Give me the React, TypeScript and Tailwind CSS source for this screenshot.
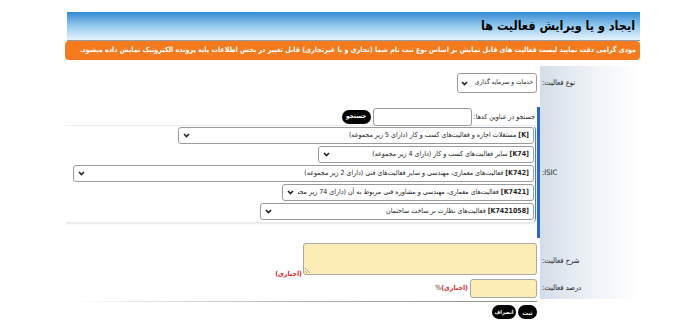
const SELECTS = [
  { code: "[K]", text: "مستغلات اجاره و فعالیت‌های کسب و کار (دارای 5 زیر مجموعه)", w: "w-[356px]" },
  { code: "[K74]", text: "سایر فعالیت‌های کسب و کار (دارای 4 زیر مجموعه)", w: "w-[216px]" },
  { code: "[K742]", text: "فعالیت‌های معماری، مهندسی و سایر فعالیت‌های فنی (دارای 2 زیر مجموعه)", w: "w-[461px]" },
  { code: "[K7421]", text: "فعالیت‌های معماری، مهندسی و مشاوره فنی مربوط به آن (دارای 74 زیر مجموعه)", w: "w-[252px]" },
  { code: "[K7421058]", text: "فعالیت‌های نظارت بر ساخت ساختمان", w: "w-[274px]" },
];

function Chevron() {
  return (
    <svg width="7" height="5" viewBox="0 0 7 5" className="shrink-0">
      <path d="M1 1l2.5 2.6L6 1" fill="none" stroke="#222" strokeWidth="1.6" />
    </svg>
  );
}

function Label(props: { text: string; className?: string }) {
  return (
    <div
      className={
        "flex justify-end bg-gradient-to-r from-[#d3dde9] via-[#eef2f7] to-white pl-[2px] text-[7.5px] whitespace-nowrap text-[#222] " +
        (props.className ?? "")
      }
    >
      {props.text}
    </div>
  );
}

export default function App() {
  return (
    <div
      dir="rtl"
      className="h-[334px] w-[694px] overflow-hidden bg-white pt-[12px] pr-[54px] pl-[65px] font-['DejaVu_Sans_Condensed','DejaVu_Sans',sans-serif]"
    >
      {/* header */}
      <div className="ml-[2px] flex h-[29px] items-center border-b border-[#8f9ba6] bg-gradient-to-b from-[#2f8ad3] via-[#93c9ee] to-[#e6f2fb] pr-[5px]">
        <span className="text-[12.5px] font-bold text-black">ایجاد و یا ویرایش فعالیت ها</span>
      </div>
      <div className="flex h-[19px] items-center overflow-hidden rounded-[4px] bg-[#f47a1e] px-[4px] text-[7.15px] font-bold whitespace-nowrap text-white">
        مودی گرامی دقت نمایید لیست فعالیت های قابل نمایش بر اساس نوع ثبت نام شما (تجاری و یا غیرتجاری) قابل تغییر در بخش اطلاعات پایه پرونده الکترونیک نمایش داده میشود.
      </div>

      {/* form */}
      <div className="mt-[6px] grid grid-cols-[100px_475px]">
        <Label text="نوع فعالیت:" className="items-start pt-[7px] leading-[20px]" />
        <div className="pt-[7px] pr-[3px] pb-[12px]">
          <div className="flex h-[20px] w-[80px] items-center justify-between rounded-[3px] border border-[#9a9a9a] bg-white px-[3px] text-[6.5px] whitespace-nowrap text-[#222]">
            <span>خدمات و سرمایه گذاری</span>
            <Chevron />
          </div>
        </div>

        <Label text="ISIC:" className="items-center pt-[2px]" />
        <div className="mt-[2px] border-r-[3px] border-[#2c68bd] pt-[1px] pb-[15px]">
          <div className="flex h-[18px] items-center gap-[2px] pr-[2px]">
            <span className="text-[7px] whitespace-nowrap text-[#222]">جستجو در عناوین کدها:</span>
            <div className="h-[18px] w-[99px] rounded-[3px] border border-[#9a9a9a] bg-white" />
            <div className="flex h-[14px] w-[29px] items-center justify-center rounded-full bg-black text-[6.5px] font-bold text-white">
              جستجو
            </div>
          </div>
          <div className="mt-[-1px] mr-[1px] flex flex-col items-start gap-[2px] rounded-r-[5px] border border-l-0 border-[#e6ecf3] border-r-[#4a7fc9] pt-[1px] pr-[1px] pb-[2px] shadow-[1px_1px_2px_rgba(0,0,0,0.1)]">
            {SELECTS.map((s) => (
              <div
                key={s.code}
                className={
                  "flex h-[17px] items-center justify-between gap-[4px] overflow-hidden rounded-[3px] border border-[#9a9a9a] bg-white px-[4px] text-[7px] whitespace-nowrap text-[#222] " +
                  s.w
                }
              >
                <span className="overflow-hidden">
                  <b>{s.code}</b> {s.text}
                </span>
                <Chevron />
              </div>
            ))}
          </div>
        </div>

        <Label text="شرح فعالیت:" className="items-center pt-[8px]" />
        <div className="flex items-end gap-[1px] pt-[5px] pr-[3px]">
          <div className="relative h-[32px] w-[234px] rounded-[3px] border border-[#a8a8a8] bg-[#fdedb6]">
            <svg width="6" height="6" viewBox="0 0 6 6" className="absolute bottom-[1px] left-[1px]">
              <path d="M0 1l5 5M0 4l2 2" stroke="#999" strokeWidth="0.8" />
            </svg>
          </div>
          <span className="mb-[-4px] text-[7px] font-bold text-[#d8262e]">(اجباری)</span>
        </div>

        <Label text="درصد فعالیت:" className="h-[24px] items-center pt-[1px]" />
        <div className="flex items-center gap-[2px] pt-[2px] pr-[3px]">
          <div className="h-[19px] w-[67px] rounded-[3px] border border-[#a8a8a8] bg-[#fdedb6]" />
          <span className="text-[7px] font-bold text-[#d8262e]">
            (اجباری)<span className="font-normal text-[#333]">%</span>
          </span>
        </div>

        <div />
        <div className="pr-[3px] pl-[5px]">
          <div className="mt-[2px] h-[1px] bg-gradient-to-l from-[#8a8a8a] via-[#b0b0b0] to-transparent" />
          <div className="mt-[3px] flex gap-[2px]">
            <div className="flex h-[14px] w-[19px] items-center justify-center rounded-full bg-black text-[6px] font-bold whitespace-nowrap text-white">
              ثبت
            </div>
            <div className="flex h-[14px] w-[24px] items-center justify-center rounded-full bg-black text-[5.5px] font-bold whitespace-nowrap text-white">
              انصراف
            </div>
          </div>
        </div>
      </div>
    </div>
  );
}
